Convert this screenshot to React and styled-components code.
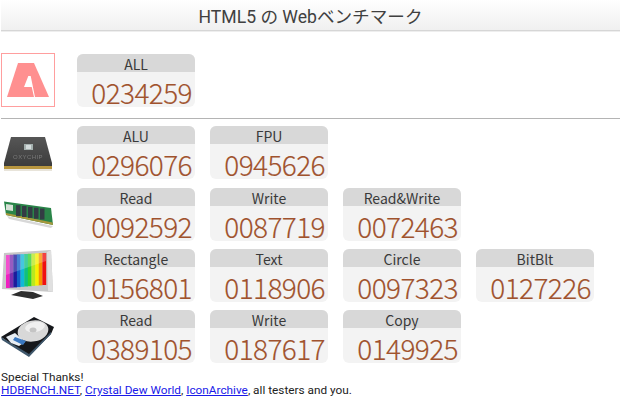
import React from 'react';
import styled, { createGlobalStyle } from 'styled-components';

const GlobalStyle = createGlobalStyle`
  html, body {
    margin: 0;
    padding: 0;
    background: #fff;
    overflow: hidden;
  }
  body {
    font-family: Roboto, "Noto Sans CJK JP", sans-serif;
  }
`;

function AppIcon() {
  return (
    <Logo>
      <svg width="42" height="34" viewBox="0 0 42 34">
        <path d="M0 34 L11 0 L27 0 L42 34 Z" fill="#ff9090" />
        <path d="M17 24 L21.3 13 L23.7 13 L28 34 L27 34 L24.7 24 Z" fill="#fff" />
      </svg>
    </Logo>
  );
}

function ChipIcon() {
  return (
    <IconSvg viewBox="0 0 61 53">
      <defs>
        <linearGradient id="chipTop" x1="0" y1="0" x2="0" y2="1">
          <stop offset="0" stopColor="#565656" />
          <stop offset="1" stopColor="#3c3c3c" />
        </linearGradient>
      </defs>
      <path d="M3 41 H51 V45 H3 Z" fill="#e8e4da" />
      <path d="M3 40 H51 V43 H3 Z" fill="#b8963f" />
      <path d="M10 11 L44 11 L51 37 L51 40 L3 40 L3 37 Z" fill="url(#chipTop)" />
      <rect x="23" y="18" width="9" height="6" fill="#a4b0ae" />
      <rect x="25" y="19" width="5" height="4" fill="#d4dcdc" />
      <IconText x="27" y="33" textAnchor="middle">OXYCHIP</IconText>
    </IconSvg>
  );
}

const ramChips = [15, 21, 27, 33, 39];

function RamIcon() {
  return (
    <IconSvg viewBox="0 0 61 53">
      <path d="M6 28 L52 38 L50 40 L8 31 Z" fill="#d8d8d8" />
      <path d="M3 13.5 L50 20 L52 37 L5 27 Z" fill="#2a8549" />
      <path d="M5 25 L51.5 34.5 L52 37 L5 27 Z" fill="#a8983c" />
      <path d="M5 16 L12 17 L12 23 L5 22 Z" fill="#d6e0d6" />
      {ramChips.map((x) => (
        <path
          key={x}
          d={`M${x} ${15.5 + (x - 3) * 0.14} h4.5 v${11} h-4.5 Z`}
          fill="#333c44"
        />
      ))}
    </IconSvg>
  );
}

const monitorColors = ['#f020c0', '#7a2fb0', '#1c1c9c', '#1060c8', '#10b8d8', '#10c080', '#30d030', '#b8e820', '#f8f000', '#f89000', '#f01010'];

function MonitorIcon() {
  return (
    <IconSvg viewBox="0 0 61 53">
      <path d="M20 42 L32 43 L42 47 L32 50 L10 46 Z" fill="#2e2e2e" />
      <path d="M3 4 L50 1 L52 43 L1 40 Z" fill="#c8c8c8" />
      <path d="M50 1 L52 43 L47 42 L46 3 Z" fill="#e0e0e0" />
      {monitorColors.map((c, i) => (
        <rect key={c} x={5 + i * 3.64} y={6 - i * 0.2} width="3.8" height={33 - i * 0.1} fill={c} />
      ))}
      <path d="M5 6 L45 4 L45 12 L5 26 Z" fill="#fff" opacity="0.22" />
    </IconSvg>
  );
}

function DiskIcon() {
  return (
    <IconSvg viewBox="0 0 61 53">
      <path d="M0 27 L33 7 L53 17 L50 24 L28 46 Z" fill="#15171b" />
      <path d="M0 27 L28 44 L50 22 L50 24 L28 47 L1 30 Z" fill="#40586c" />
      <ellipse cx="32" cy="21" rx="15.5" ry="10.5" fill="#d8d8d8" transform="rotate(-10 32 21)" />
      <ellipse cx="34" cy="17" rx="10" ry="5" fill="#f0f0f0" transform="rotate(-10 34 17)" />
      <ellipse cx="32" cy="20" rx="3.5" ry="2.5" fill="#c4c4c4" />
      <path d="M5 27 L14 23 L24 32 L18 36 L10 33 Z" fill="#e8eef4" />
      <path d="M14 27 L25 31 L22 35 L12 30 Z" fill="#3a78c0" />
    </IconSvg>
  );
}

function Score({ label, value }) {
  return (
    <Card>
      <CardLabel>{label}</CardLabel>
      <CardValue>{value}</CardValue>
    </Card>
  );
}

export default function App() {
  return (
    <Page>
      <GlobalStyle />
      <Header>HTML5 の Webベンチマーク</Header>
      <TotalRow>
        <IconCell><AppIcon /></IconCell>
        <Score label="ALL" value="0234259" />
      </TotalRow>
      <Divider />
      <Rows>
        <FirstRow>
          <IconCell><ChipIcon /></IconCell>
          <Score label="ALU" value="0296076" />
          <Score label="FPU" value="0945626" />
        </FirstRow>
        <Row>
          <IconCell><RamIcon /></IconCell>
          <Score label="Read" value="0092592" />
          <Score label="Write" value="0087719" />
          <Score label="Read&Write" value="0072463" />
        </Row>
        <Row>
          <IconCell><MonitorIcon /></IconCell>
          <Score label="Rectangle" value="0156801" />
          <Score label="Text" value="0118906" />
          <Score label="Circle" value="0097323" />
          <Score label="BitBlt" value="0127226" />
        </Row>
        <Row>
          <IconCell><DiskIcon /></IconCell>
          <Score label="Read" value="0389105" />
          <Score label="Write" value="0187617" />
          <Score label="Copy" value="0149925" />
        </Row>
      </Rows>
      <Footer>
        <div>Special Thanks!</div>
        <div>
          <a href="#hdbench">HDBENCH.NET</a>, <a href="#crystal">Crystal Dew World</a>, <a href="#icon">IconArchive</a>, all testers and you.
        </div>
      </Footer>
    </Page>
  );
}

const Page = styled.div`
  width: 620px;
  height: 400px;
  padding-left: 1px;
  box-sizing: border-box;
`;

const Header = styled.div`
  height: 30px;
  line-height: 35px;
  text-align: center;
  font-size: 17.6px;
  color: #404040;
  background: linear-gradient(#ffffff, #f0f0f0);
  border-bottom: 1px solid #d6d6d6;
  box-shadow: 0 1px 0 #eee;
`;

const Row = styled.div`
  display: flex;
  gap: 15px;
`;

const TotalRow = styled(Row)`
  margin-top: 23px;
`;

const FirstRow = styled(Row)`
  margin-bottom: 1px;
`;

const Rows = styled.div`
  display: flex;
  flex-direction: column;
  gap: 8px;
`;

const IconCell = styled.div`
  width: 61px;
  height: 53px;
`;

const IconSvg = styled.svg`
  display: block;
  width: 61px;
  height: 53px;
  filter: blur(0.35px);
`;

const IconText = styled.text`
  font-family: "Liberation Sans", sans-serif;
  font-size: 6px;
  letter-spacing: 0.4px;
  fill: #7a7a7a;
`;

const Logo = styled.div`
  width: 54px;
  height: 54px;
  box-sizing: border-box;
  border: 1px solid #ff9e9e;
  display: flex;
  align-items: center;
  justify-content: center;
  margin-top: -1px;
`;

const Divider = styled.div`
  height: 1px;
  background: #b4b4b4;
  margin: 11px 0 7px;
`;

const Card = styled.div`
  width: 118px;
  height: 53px;
  border-radius: 6px;
  background: #f3f3f3;
`;

const CardLabel = styled.div`
  height: 18px;
  box-sizing: border-box;
  padding-top: 3px;
  line-height: 15px;
  border-radius: 6px 6px 0 0;
  background: #d8d8d8;
  text-align: center;
  font-family: "Noto Sans CJK JP", sans-serif;
  font-size: 14px;
  color: #3a3a3a;
`;

const CardValue = styled.div`
  height: 35px;
  box-sizing: border-box;
  padding: 6px 3px 0 0;
  line-height: 29px;
  text-align: right;
  font-family: "Noto Sans CJK JP", sans-serif;
  font-size: 28px;
  font-weight: 300;
  letter-spacing: -0.6px;
  -webkit-text-stroke: 0.15px #a0522d;
  color: #a0522d;
`;

const Footer = styled.div`
  margin-top: 8px;
  font-size: 11.8px;
  line-height: 13px;
  color: #222;

  a {
    color: #1a1ae8;
  }
`;
